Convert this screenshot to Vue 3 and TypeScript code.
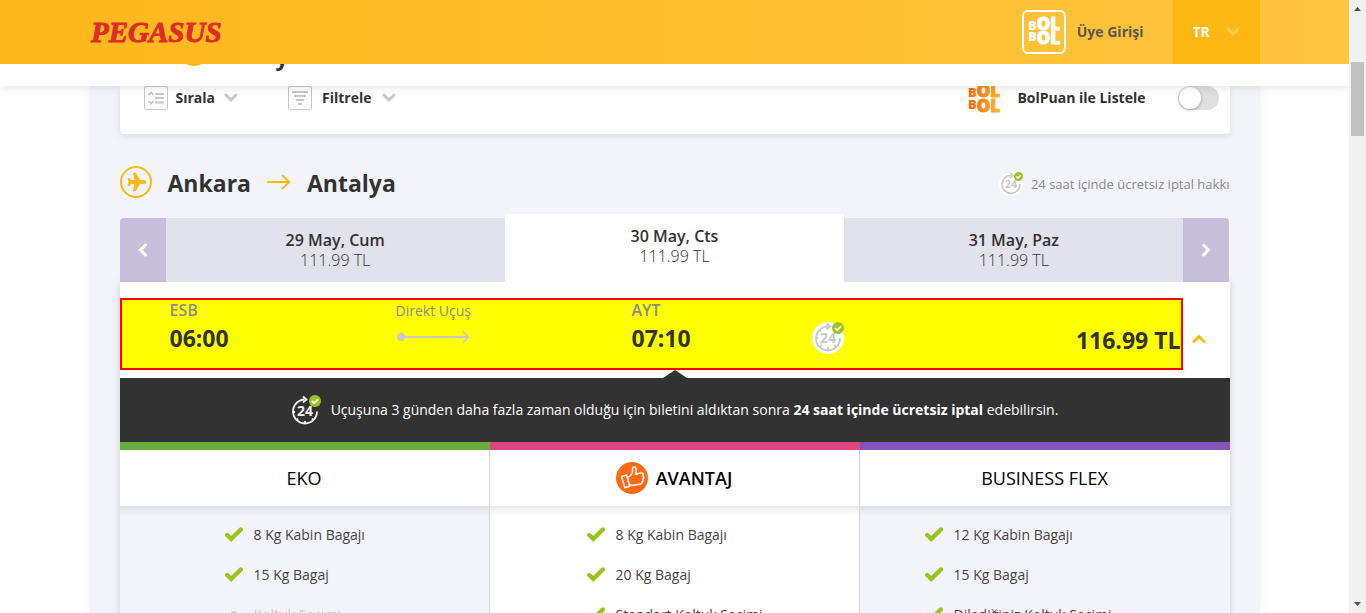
<script setup lang="ts">
import { ref } from 'vue'

interface Feature {
  text: string
  included: boolean
}
interface Fare {
  id: string
  name: string
  featured: boolean
  features: Feature[]
}

const listByPoints = ref(false)
const language = ref('TR')

const days = [
  { date: '29 May, Cum', price: '111.99 TL', active: false },
  { date: '30 May, Cts', price: '111.99 TL', active: true },
  { date: '31 May, Paz', price: '111.99 TL', active: false },
]

const fares: Fare[] = [
  {
    id: 'eko',
    name: 'EKO',
    featured: false,
    features: [
      { text: '8 Kg Kabin Bagajı', included: true },
      { text: '15 Kg Bagaj', included: true },
      { text: 'Koltuk Seçimi', included: false },
    ],
  },
  {
    id: 'avantaj',
    name: 'AVANTAJ',
    featured: true,
    features: [
      { text: '8 Kg Kabin Bagajı', included: true },
      { text: '20 Kg Bagaj', included: true },
      { text: 'Standart Koltuk Seçimi', included: true },
    ],
  },
  {
    id: 'business',
    name: 'BUSINESS FLEX',
    featured: false,
    features: [
      { text: '12 Kg Kabin Bagajı', included: true },
      { text: '15 Kg Bagaj', included: true },
      { text: 'Dilediğiniz Koltuk Seçimi', included: true },
    ],
  },
]
</script>

<template>
  <div class="window">
    <div class="view">
      <header class="topbar">
        <div class="container topbar-inner">
          <a href="#" class="brand" aria-label="Pegasus">
            <svg width="134" height="32" viewBox="0 0 134 32">
              <text x="1" y="26" class="brand-text">PEGASUS</text>
            </svg>
          </a>
          <div class="account">
            <a href="#" class="login">
              <svg width="44" height="44" viewBox="0 0 44 44">
                <rect x="1" y="1" width="42" height="42" rx="5" fill="none" stroke="#fff" stroke-width="2" />
                <g class="bol bol-white">
                  <text x="6" y="20"><tspan class="bol-b">B</tspan>OL</text>
                  <text x="6" y="34"><tspan class="bol-b" dy="-3">B</tspan><tspan dy="3">OL</tspan></text>
                </g>
              </svg>
              <span>Üye Girişi</span>
            </a>
            <label class="language">
              <select v-model="language" aria-label="Dil">
                <option>TR</option>
              </select>
              <svg width="14" height="10" viewBox="0 0 14 10">
                <path d="M2 2l5 5 5-5" fill="none" stroke="#ffcb4a" stroke-width="3" stroke-linecap="round" />
              </svg>
            </label>
          </div>
        </div>
      </header>

      <div class="strip">
        <div class="container strip-inner">
          <span class="strip-ring"></span>
          <span class="strip-title">y</span>
        </div>
      </div>

      <main class="container page">
        <section class="filters">
          <button type="button" class="filter">
            <svg width="24" height="24" viewBox="0 0 24 24" fill="none" stroke="#c8c8c8">
              <rect x=".5" y=".5" width="23" height="23" rx="1.5" />
              <path d="M4.500 9l2.500-2.500 2.500 2.500M4.500 15l2.500 2.500 2.500-2.500" stroke-width="1.800" />
              <path d="M11 8h9M11 12h9M11 16.500h9" stroke-width="2" />
            </svg>
            <span>Sırala</span>
            <svg class="chevron" width="14" height="10" viewBox="0 0 14 10">
              <path d="M2 2l5 5 5-5" fill="none" stroke="#c8c8c8" stroke-width="3" stroke-linecap="round" />
            </svg>
          </button>
          <button type="button" class="filter">
            <svg width="24" height="24" viewBox="0 0 24 24" fill="none" stroke="#c8c8c8">
              <rect x=".5" y=".5" width="23" height="23" rx="1.5" />
              <path d="M4 6h16M6 10h12M8 14h8M10 18h4" stroke-width="2" />
            </svg>
            <span>Filtrele</span>
            <svg width="14" height="10" viewBox="0 0 14 10">
              <path d="M2 2l5 5 5-5" fill="none" stroke="#c8c8c8" stroke-width="3" stroke-linecap="round" />
            </svg>
          </button>
          <label class="points">
            <svg width="34" height="32" viewBox="0 0 34 32">
              <defs>
                <linearGradient id="bolGradient" gradientUnits="userSpaceOnUse" x1="0" y1="0" x2="34" y2="0">
                  <stop offset="0" stop-color="#f7620e" />
                  <stop offset="1" stop-color="#fdb933" />
                </linearGradient>
              </defs>
              <g class="bol bol-orange">
                <text x="1" y="15"><tspan class="bol-b">B</tspan>OL</text>
                <text x="1" y="30"><tspan class="bol-b" dy="-3">B</tspan><tspan dy="3">OL</tspan></text>
              </g>
            </svg>
            <span class="points-text">BolPuan ile Listele</span>
            <input v-model="listByPoints" type="checkbox" class="switch" role="switch" />
          </label>
        </section>

        <section class="route">
          <svg width="32" height="32" viewBox="0 0 32 32">
            <circle cx="16" cy="16" r="15" fill="none" stroke="#fdb813" stroke-width="2" />
            <path
              d="M26 16c0-1-1.200-1.500-2.500-1.500h-3.700L15.300 7H13.500l1.700 7.500h-4L9.500 12.400H8l1.100 3.600L8 19.600h1.500l1.700-2.100h4L13.500 25h1.800l4.500-7.500h3.700c1.300 0 2.500-.5 2.500-1.500z"
              fill="#fdb813"
              stroke="#fdb813"
              stroke-linejoin="round"
            />
          </svg>
          <h2>Ankara</h2>
          <svg width="24" height="16" viewBox="0 0 24 16">
            <path d="M1 8h21M15.500 1.500L22.500 8l-7 6.500" fill="none" stroke="#fdb813" stroke-width="1.800" stroke-linecap="round" />
          </svg>
          <h2>Antalya</h2>
          <p class="route-note">
            <svg width="24" height="24" viewBox="0 0 32 32">
              <circle cx="16" cy="16" r="16" fill="#fff" />
              <g fill="none" stroke="#c8c8c8" stroke-width="2.200">
                <path d="M16 4.500A12 12 0 1 0 28 16" />
                <path d="M14.500 1l4 3.500-4 3.500" />
              </g>
              <text x="16" y="21" class="badge-24">24</text>
              <circle cx="26" cy="6" r="6" fill="#98c41c" />
              <path d="M23 6l2.200 2.200L29 4.400" fill="none" stroke="#fff" stroke-width="2" />
            </svg>
            <span>24 saat içinde ücretsiz iptal hakkı</span>
          </p>
        </section>

        <nav class="dates">
          <button type="button" class="date-step first" aria-label="Önceki gün">
            <svg width="10" height="14" viewBox="0 0 10 14">
              <path d="M7.500 2L2.500 7l5 5" fill="none" stroke="#fff" stroke-width="3" stroke-linecap="round" />
            </svg>
          </button>
          <button v-for="day in days" :key="day.date" type="button" class="date" :class="{ active: day.active }">
            <strong>{{ day.date }}</strong>
            <span>{{ day.price }}</span>
          </button>
          <button type="button" class="date-step last" aria-label="Sonraki gün">
            <svg width="10" height="14" viewBox="0 0 10 14">
              <path d="M2.500 2l5 5-5 5" fill="none" stroke="#fff" stroke-width="3" stroke-linecap="round" />
            </svg>
          </button>
        </nav>

        <section class="panel">
          <div class="flight">
            <div class="flight-row">
              <div class="stop">
                <span class="code">ESB</span>
                <span class="time">06:00</span>
              </div>
              <div class="leg">
                <span>Direkt Uçuş</span>
                <svg width="76" height="14" viewBox="0 0 76 14">
                  <path d="M5 7h67" stroke="#c8c8c8" stroke-width="2" />
                  <path d="M66.500 1l6 6-6 6" fill="none" stroke="#c8c8c8" stroke-width="1.500" />
                  <circle cx="5" cy="7" r="4" fill="#c8c8c8" />
                </svg>
              </div>
              <div class="stop">
                <span class="code">AYT</span>
                <span class="time">07:10</span>
              </div>
              <svg class="row-badge" width="32" height="32" viewBox="0 0 32 32">
                <circle cx="16" cy="16" r="16" fill="#fff" />
                <g fill="none" stroke="#c8c8c8" stroke-width="1.800">
                  <path d="M16 4.500A12 12 0 1 0 28 16" />
                  <path d="M14.500 1.500l3.500 3-3.500 3M16 28v-3M4 16h2M8 25l1.500-2M24 25l-1.500-2M8 8l1 1" />
                </g>
                <text x="16" y="21" class="badge-24">24</text>
                <circle cx="26" cy="6" r="6" fill="#98c41c" />
                <path d="M23 6l2.200 2.200L29 4.400" fill="none" stroke="#fff" stroke-width="2" />
              </svg>
              <span class="price">116.99 TL</span>
            </div>
            <button type="button" class="collapse" aria-label="Kapat">
              <svg width="14" height="10" viewBox="0 0 14 10">
                <path d="M2 7.500l5-5 5 5" fill="none" stroke="#fdb813" stroke-width="3" stroke-linecap="round" />
              </svg>
            </button>
          </div>

          <p class="notice">
            <svg width="30" height="30" viewBox="0 0 30 30">
              <g fill="none" stroke="#f4f4f4" stroke-width="1.800">
                <path d="M13.500 4.500A12 12 0 1 0 26 16.500" />
                <path d="M12 1.500l3.500 3-3.500 3M14 29v-3M2 17h2M5.500 25.500l1.500-2M22.500 25.500l-1.500-2" />
              </g>
              <text x="14" y="21" class="badge-24 light">24</text>
              <circle cx="24" cy="6" r="6" fill="#98c41c" />
              <path d="M21 6l2.200 2.200L27 4.400" fill="none" stroke="#fff" stroke-width="2" />
            </svg>
            <span>Uçuşuna 3 günden daha fazla zaman olduğu için biletini aldıktan sonra <b>24 saat içinde ücretsiz iptal</b> edebilirsin.</span>
          </p>

          <div class="fares">
            <article v-for="fare in fares" :key="fare.id" class="fare" :class="fare.id">
              <h3>
                <svg v-if="fare.featured" width="32" height="32" viewBox="0 0 32 32">
                  <circle cx="16" cy="16" r="16" fill="#ff6a13" />
                  <g fill="none" stroke="#fff" stroke-width="1.500" stroke-linejoin="round">
                    <path d="M5.500 14.500l5-1.500 3.300 11.200-5 1.500z" />
                    <path d="M11.300 15.500c2.500-1 4.800-3.300 5.200-6l.1-2.800c.1-2.200 3.200-2.300 3.500 0 .3 1.900.1 3.800-.6 5.500l5.500-1.200c2.200-.3 2.700 1.500 2 3 .9 1 .9 2-.1 3 .6 1.100.3 2-.8 2.800.1 1.200-.5 1.900-1.700 2.200l-6.500 1.200c-1.600.2-2.700-.5-4.500-.1" />
                  </g>
                </svg>
                <span>{{ fare.name }}</span>
              </h3>
              <ul>
                <li v-for="feature in fare.features" :key="feature.text" :class="{ off: !feature.included }">
                  <svg v-if="feature.included" width="18" height="16" viewBox="0 0 18 16">
                    <path d="M2.200 8l4 4L15.800 2.500" fill="none" stroke="#98c41c" stroke-width="4.400" stroke-linecap="round" />
                  </svg>
                  <svg v-else width="18" height="16" viewBox="0 0 18 16">
                    <circle cx="9" cy="7" r="3" fill="#c8c8c8" />
                  </svg>
                  <span>{{ feature.text }}</span>
                </li>
              </ul>
            </article>
          </div>
        </section>
      </main>
    </div>

    <div class="scrollbar" aria-hidden="true">
      <svg width="17" height="17" viewBox="0 0 17 17"><path d="M5 11l3.500-4 3.500 4z" fill="#505050" /></svg>
      <div class="track"><div class="thumb"></div></div>
      <svg width="17" height="17" viewBox="0 0 17 17"><path d="M5 6l3.500 4L12 6z" fill="#505050" /></svg>
    </div>
  </div>
</template>

<style>
body {
  margin: 0;
  overflow: hidden;
}
</style>

<style scoped>
.window {
  display: flex;
  height: 100vh;
  font-family: 'Open Sans', 'Noto Sans', sans-serif;
  font-size: 14px;
  line-height: 20px;
  color: #323232;
}
.window * {
  box-sizing: border-box;
}
svg {
  display: block;
  flex: none;
}
button {
  font: inherit;
  color: inherit;
  border: 0;
  padding: 0;
  background: none;
  cursor: pointer;
}
a {
  color: inherit;
  text-decoration: none;
}
.view {
  flex: 1;
  min-width: 0;
  display: flex;
  flex-direction: column;
  overflow: hidden;
  background: #fff;
}
.container {
  width: 100%;
  max-width: 1170px;
  margin: 0 auto;
}

.topbar {
  position: relative;
  z-index: 3;
  flex: none;
  background: linear-gradient(90deg, #fdb71a, #fec540);
}
.topbar-inner {
  display: flex;
  justify-content: space-between;
  align-items: center;
  height: 64px;
}
.brand-text {
  font: italic 700 29px 'Liberation Serif', serif;
  fill: #e02b2b;
  stroke: #e02b2b;
  stroke-width: 1;
}
.account {
  display: flex;
  align-self: stretch;
}
.login {
  display: flex;
  align-items: center;
  gap: 11px;
  margin-right: 29px;
  font-weight: 700;
  color: #5a5650;
}
.language {
  display: flex;
  align-items: center;
  justify-content: space-between;
  width: 87px;
  padding: 0 20px;
  background: #fdb813;
}
.language select {
  appearance: none;
  border: 0;
  padding: 0;
  background: none;
  font: inherit;
  font-weight: 700;
  color: #fff;
}
.bol {
  font-family: 'Open Sans', sans-serif;
  font-size: 17px;
  font-weight: 800;
  stroke-width: 1;
  stroke-linejoin: round;
}
.bol-b {
  font-size: 13px;
  stroke-width: 0;
}
.bol-white {
  fill: #fff;
  stroke: #fff;
}
.bol-orange {
  fill: url(#bolGradient);
  stroke: url(#bolGradient);
}

.strip {
  position: relative;
  z-index: 2;
  flex: none;
  height: 22px;
  overflow: hidden;
  background: #fff;
  box-shadow: 0 2px 10px rgba(0, 0, 0, 0.1);
}
.strip-inner {
  display: flex;
  gap: 66px;
  padding-left: 88px;
}
.strip-ring {
  width: 32px;
  height: 32px;
  margin-top: -30px;
  border: 2px solid #fdb813;
  border-radius: 50%;
}
.strip-title {
  margin-top: -24px;
  font-size: 23px;
  line-height: 32px;
  font-weight: 700;
}

.page {
  flex: 1;
  min-height: 0;
  overflow: hidden;
  padding: 0 30px;
  background: #f3f4f9;
  box-shadow: 0 0 12px rgba(0, 0, 0, 0.06);
}
.filters {
  display: flex;
  align-items: flex-start;
  height: 48px;
  padding: 0 11px 0 24px;
  background: #fff;
  border-radius: 0 0 4px 4px;
  box-shadow: 0 2px 6px rgba(0, 0, 0, 0.1);
}
.filter {
  display: flex;
  align-items: center;
  gap: 8px;
  height: 24px;
  margin-right: 50px;
  font-weight: 700;
}
.filter + .filter {
  gap: 10px;
}
.chevron {
  margin-left: 1px;
}
.points {
  display: flex;
  align-items: center;
  height: 24px;
  margin-left: auto;
  font-weight: 700;
}
.points-text {
  margin: 0 32px 0 16px;
}
.switch {
  appearance: none;
  width: 41px;
  height: 24px;
  margin: 0;
  padding: 1px;
  border-radius: 12px;
  background: #dedede;
}
.switch::before {
  content: '';
  display: block;
  width: 22px;
  height: 22px;
  border-radius: 50%;
  background: #fff;
  box-shadow: 0 1px 3px rgba(0, 0, 0, 0.3);
}
.switch:checked::before {
  margin-left: auto;
}

.route {
  display: flex;
  align-items: center;
  height: 32px;
  margin: 32px 0 16px;
}
.route h2 {
  margin: 0 16px;
  padding-top: 2px;
  font-size: 23px;
  line-height: 32px;
  font-weight: 700;
}
.route-note {
  display: flex;
  align-items: center;
  gap: 8px;
  margin: 0 0 0 auto;
  padding-top: 4px;
  font-size: 13px;
  color: #8a8a8a;
}
.badge-24 {
  font: 700 14px 'Open Sans', sans-serif;
  text-anchor: middle;
  fill: #c8c8c8;
}
.badge-24.light {
  fill: #f4f4f4;
}

.dates {
  display: flex;
  align-items: flex-end;
  height: 68px;
}
.date-step {
  display: flex;
  align-items: center;
  justify-content: center;
  width: 46px;
  height: 64px;
  background: #c5bfda;
}
.date-step.first {
  border-radius: 4px 0 0 0;
}
.date-step.last {
  border-radius: 0 4px 0 0;
}
.date {
  display: flex;
  flex: 1;
  flex-direction: column;
  align-items: center;
  justify-content: center;
  height: 64px;
  font-size: 16px;
  background: #e2e2ec;
}
.date.active {
  height: 68px;
  padding-bottom: 4px;
  background: #fff;
}
.date strong {
  font-weight: 600;
}
.date span {
  font-weight: 300;
}

.panel {
  background: #fff;
  box-shadow: 0 0 8px rgba(0, 0, 0, 0.14);
}
.flight {
  display: flex;
  padding: 16px 0 8px;
  background: #fff;
}
.flight-row {
  display: grid;
  flex: 1;
  grid-template-columns: 226fr 236fr 180fr 80fr 289fr;
  height: 72px;
  padding-left: 48px;
  border: 2px solid #f00;
  background: #ff0;
}
.stop {
  display: flex;
  flex-direction: column;
}
.code {
  font-size: 16px;
  font-weight: 600;
  line-height: 20px;
  color: #8c8c8c;
}
.time,
.price {
  font-size: 23px;
  font-weight: 700;
  line-height: 36px;
}
.leg {
  display: flex;
  flex-direction: column;
  gap: 8px;
  color: #8c8c8c;
}
.leg span {
  line-height: 22px;
}
.row-badge {
  align-self: center;
  margin-top: 8px;
}
.price {
  justify-self: end;
  align-self: center;
  margin-top: 12px;
}
.collapse {
  display: flex;
  align-items: center;
  justify-content: center;
  width: 47px;
  height: 72px;
  padding: 10px 14px 0 0;
}
.notice {
  position: relative;
  display: flex;
  align-items: center;
  justify-content: center;
  gap: 10px;
  height: 64px;
  margin: 0;
  color: #fff;
  background: #323232;
}
.notice::before {
  content: '';
  position: absolute;
  top: -8px;
  left: 50%;
  margin-left: -12px;
  border: 12px solid transparent;
  border-top: 0;
  border-bottom: 8px solid #323232;
}

.fares {
  display: grid;
  grid-template-columns: repeat(3, 1fr);
}
.fare {
  border-top: 8px solid;
  background: #f3f4f9;
}
.fare:not(:last-child) h3,
.fare:not(:last-child) ul {
  border-right: 1px solid #d6d6da;
}
.fare h3 {
  position: relative;
  display: flex;
  align-items: center;
  justify-content: center;
  gap: 8px;
  height: 56px;
  margin: 0;
  background: #fff;
  font-size: 18px;
  font-weight: 500;
  color: #000;
}
.fare h3::after {
  content: '';
  position: absolute;
  top: 100%;
  left: 0;
  right: 0;
  height: 10px;
  background: linear-gradient(rgba(50, 50, 60, 0.1), rgba(50, 50, 60, 0));
}
.fare ul {
  list-style: none;
  margin: 0;
  padding: 9px 0 8px 105px;
}
.fare li {
  display: flex;
  align-items: center;
  gap: 11px;
  height: 40px;
  color: #444;
}
.fare li.off {
  color: #c8c8c8;
}
.fare.eko {
  border-color: #6aab40;
}
.fare.avantaj {
  border-color: #db487e;
  background: #fff;
}
.avantaj h3 {
  font-weight: 600;
}
.avantaj ul {
  padding-left: 97px;
}
.fare.business {
  border-color: #8455b8;
}
.business ul {
  padding-left: 65px;
}

.scrollbar {
  display: flex;
  flex: none;
  flex-direction: column;
  width: 17px;
  background: #f1f1f1;
}
.track {
  flex: 1;
  padding: 45px 2px 0;
}
.thumb {
  height: 74px;
  background: #c1c1c1;
}
</style>
